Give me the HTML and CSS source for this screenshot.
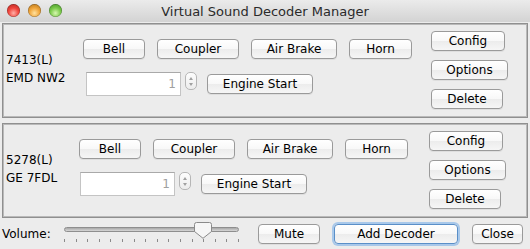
FILE: index.html
```html
<!DOCTYPE html>
<html lang="en">
<head>
<meta charset="utf-8">
<title>Virtual Sound Decoder Manager</title>
<link rel="stylesheet" href="styles.css">
</head>
<body>
<div class="window">
  <header class="titlebar">
    <div class="lights">
      <span class="light light-red"></span>
      <span class="light light-amber"></span>
      <span class="light light-green"></span>
    </div>
    <div class="title">Virtual Sound Decoder Manager</div>
  </header>
  <main class="content">
    <section class="decoder decoder-a">
      <div class="name"><div>7413(L)</div><div>EMD NW2</div></div>
      <div class="controls">
        <div class="row-fn">
          <button class="btn w-bell">Bell</button>
          <button class="btn w-coupler">Coupler</button>
          <button class="btn w-brake">Air Brake</button>
          <button class="btn w-horn">Horn</button>
        </div>
        <div class="row-start">
          <div class="spinner">
            <div class="field">1</div>
            <div class="stepper"><span class="up"></span><span class="down"></span></div>
          </div>
          <button class="btn w-start">Engine Start</button>
        </div>
      </div>
      <div class="actions">
        <button class="btn w-config">Config</button>
        <button class="btn w-options">Options</button>
        <button class="btn w-delete">Delete</button>
      </div>
    </section>
    <section class="decoder decoder-b">
      <div class="name"><div>5278(L)</div><div>GE 7FDL</div></div>
      <div class="controls">
        <div class="row-fn">
          <button class="btn w-bell">Bell</button>
          <button class="btn w-coupler">Coupler</button>
          <button class="btn w-brake">Air Brake</button>
          <button class="btn w-horn">Horn</button>
        </div>
        <div class="row-start">
          <div class="spinner">
            <div class="field">1</div>
            <div class="stepper"><span class="up"></span><span class="down"></span></div>
          </div>
          <button class="btn w-start">Engine Start</button>
        </div>
      </div>
      <div class="actions">
        <button class="btn w-config">Config</button>
        <button class="btn w-options">Options</button>
        <button class="btn w-delete">Delete</button>
      </div>
    </section>
    <footer class="bottom">
      <span class="vol-label">Volume:</span>
      <div class="slider">
        <div class="track"></div>
        <div class="thumb">
          <svg width="18" height="17" viewBox="0 0 18 17"><path d="M2.5 0.5 H15.5 Q17.5 0.5 17.5 2.5 V9.5 L9 16.3 L0.5 9.5 V2.5 Q0.5 0.5 2.5 0.5 Z" fill="#f6f6f6" stroke="#8a8a8a"/></svg>
        </div>
        <div class="ticks">
          <span></span><span></span><span></span><span></span><span></span><span></span><span></span><span></span>
          <span></span><span></span><span></span><span></span><span></span><span></span><span></span><span></span>
        </div>
      </div>
      <button class="btn w-mute">Mute</button>
      <button class="btn btn-focus w-add">Add Decoder</button>
      <button class="btn w-close">Close</button>
    </footer>
  </main>
</div>
</body>
</html>
```
FILE: styles.css
```css
* { box-sizing: border-box; }
html, body { margin: 0; padding: 0; }
body {
  width: 530px;
  height: 249px;
  overflow: hidden;
  background: #ececec;
  font-family: "DejaVu Sans", "Lucida Grande", sans-serif;
  font-size: 12px;
  color: #000;
}
.window { width: 530px; height: 249px; display: flex; flex-direction: column; }

.titlebar {
  height: 22px;
  flex: none;
  position: relative;
  display: flex;
  align-items: center;
  justify-content: center;
  background: linear-gradient(#ebebeb, #d3d3d3);
}
.lights {
  position: absolute;
  left: 7px;
  top: 4px;
  display: flex;
  gap: 8px;
}
.light {
  width: 13px;
  height: 13px;
  border-radius: 50%;
  box-shadow: inset 0 0 0 0.5px rgba(0,0,0,0.35);
}
.light-red { background: radial-gradient(circle at 50% 70%, #ffb0a8 0, #f0453c 45%, #a8201a 100%); }
.light-amber { background: radial-gradient(circle at 50% 70%, #ffe2a0 0, #f0a53a 45%, #a86a12 100%); }
.light-green { background: radial-gradient(circle at 50% 70%, #d8f7b0 0, #7ccb4c 45%, #3a8a1e 100%); }
.title {
  font-size: 13px;
  color: #2a2a2a;
}

.content { flex: 1; display: flex; flex-direction: column; padding: 1px 2px 0 2px; }

.decoder {
  height: 95px;
  border: 1px solid #8f8f8f;
  box-shadow: inset 1px 1px 0 #b9b9b9, inset -1px -1px 0 #b9b9b9;
  display: flex;
  align-items: center;
  background: #ececec;
}
.decoder-b { margin-top: 5px; }

.name { line-height: 18px; padding-left: 3px; flex: none; margin-bottom: 3px; }
.decoder-a .name { width: 80px; }
.decoder-b .name { width: 76px; }

.controls { display: flex; flex-direction: column; gap: 13px; margin-bottom: 6px; }
.row-fn { display: flex; gap: 12px; }
.row-start { display: flex; align-items: center; gap: 10px; padding-left: 3px; }
.decoder-b .row-start { padding-left: 1px; }

.actions { display: flex; flex-direction: column; gap: 9px; margin-left: 19px; margin-bottom: 1px; }
.decoder-b .actions { margin-left: 21px; }

.btn {
  font: inherit;
  color: #000;
  height: 20px;
  padding: 0;
  border: 1px solid #9a9a9a;
  border-radius: 4px;
  background: linear-gradient(#ffffff 0%, #f8f8f8 50%, #ececec 51%, #f6f6f6 100%);
  box-shadow: 0 1px 0 rgba(0,0,0,0.06);
  line-height: 18px;
  text-align: center;
  flex: none;
}
.w-bell { width: 62px; }
.w-coupler { width: 82px; }
.w-brake { width: 86px; }
.w-horn { width: 63px; }
.w-start { width: 106px; }
.w-config { width: 74px; }
.w-options { width: 77px; }
.w-delete { width: 72px; }
.w-mute { width: 62px; }
.w-add { width: 124px; }
.w-close { width: 51px; }

.spinner { display: flex; align-items: flex-start; gap: 4px; }
.field {
  width: 95px;
  height: 24px;
  border: 1px solid #c4c4c4;
  border-top-color: #a9a9a9;
  background: #fff;
  color: #a0a0a0;
  text-align: right;
  padding-right: 4px;
  line-height: 22px;
}
.stepper {
  width: 12px;
  height: 18px;
  border: 1px solid #b6b6b6;
  border-radius: 5px;
  background: linear-gradient(#fdfdfd, #ececec);
  display: flex;
  flex-direction: column;
  align-items: center;
  justify-content: center;
  gap: 3px;
}
.stepper .up, .stepper .down {
  width: 0; height: 0;
  border-left: 2.5px solid transparent;
  border-right: 2.5px solid transparent;
}
.stepper .up { border-bottom: 3px solid #a0a0a0; }
.stepper .down { border-top: 3px solid #a0a0a0; }

.bottom {
  flex: 1;
  display: flex;
  align-items: center;
  padding-top: 1px;
}
.vol-label { width: 62px; flex: none; }
.slider {
  position: relative;
  width: 175px;
  height: 24px;
  flex: none;
  margin-right: 19px;
}
.track {
  position: absolute;
  left: 0; right: 0; top: 5px;
  height: 5px;
  border-radius: 3px;
  border: 1px solid #8e8e8e;
  background: linear-gradient(#a8a8a8, #d6d6d6);
}
.thumb { position: absolute; left: 130px; top: 0; line-height: 0; }
.ticks {
  position: absolute;
  left: 0; right: 0; top: 17px;
  display: flex;
  justify-content: space-between;
}
.ticks span { width: 1px; height: 3px; background: #8a8a8a; }
.bottom .btn { margin-right: 14px; }
.bottom .w-close { margin-right: 0; }
.btn-focus {
  border-color: #5a8fc8;
  box-shadow: 0 0 0 2px #a8c8ea;
}
```
